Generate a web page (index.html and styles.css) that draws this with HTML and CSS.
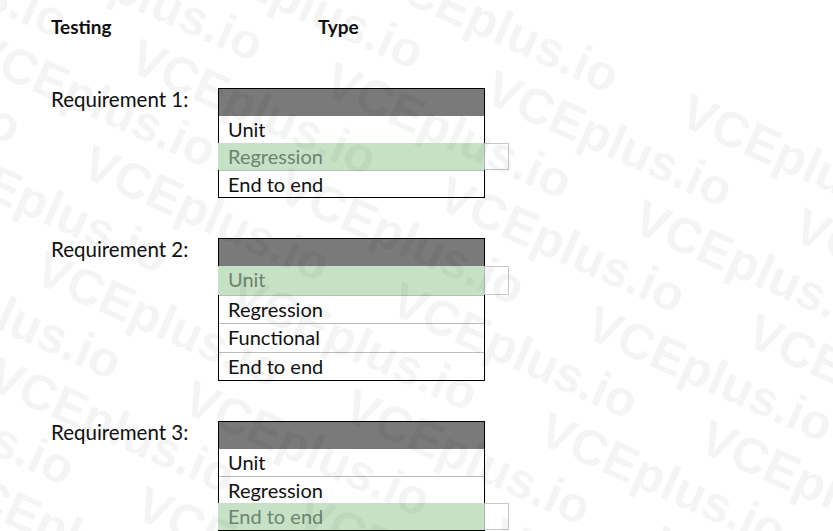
FILE: index.html
```html
<!DOCTYPE html>
<html lang="en">
<head>
  <meta charset="UTF-8">
  <title>Testing type</title>
  <link rel="stylesheet" href="styles.css">
</head>
<body>
  <div class="page">
    <div class="heads">
      <span>Testing</span>
      <span>Type</span>
    </div>

    <div class="req">
      <div class="label">Requirement 1:</div>
      <div class="select">
        <div class="head"></div>
        <div class="opt">Unit</div>
        <div class="opt picked"><span>Regression</span></div>
        <div class="opt">End to end</div>
      </div>
    </div>

    <div class="req">
      <div class="label">Requirement 2:</div>
      <div class="select tall">
        <div class="head"></div>
        <div class="opt picked"><span>Unit</span></div>
        <div class="opt">Regression</div>
        <div class="opt">Functional</div>
        <div class="opt">End to end</div>
      </div>
    </div>

    <div class="req">
      <div class="label">Requirement 3:</div>
      <div class="select">
        <div class="head"></div>
        <div class="opt">Unit</div>
        <div class="opt">Regression</div>
        <div class="opt picked"><span>End to end</span></div>
      </div>
    </div>
  </div>

  <!-- watermark over the whole picture -->
  <div class="wm" aria-hidden="true">
    <div class="wm-inner">
      <div class="wm-line">VCEplus.io VCEplus.io VCEplus.io VCEplus.io</div>
      <div class="wm-line">VCEplus.io VCEplus.io VCEplus.io VCEplus.io</div>
      <div class="wm-line">VCEplus.io VCEplus.io VCEplus.io VCEplus.io</div>
      <div class="wm-line">VCEplus.io VCEplus.io VCEplus.io VCEplus.io</div>
      <div class="wm-line">VCEplus.io VCEplus.io VCEplus.io VCEplus.io</div>
      <div class="wm-line">VCEplus.io VCEplus.io VCEplus.io VCEplus.io</div>
      <div class="wm-line">VCEplus.io VCEplus.io VCEplus.io VCEplus.io</div>
      <div class="wm-line">VCEplus.io VCEplus.io VCEplus.io VCEplus.io</div>
      <div class="wm-line">VCEplus.io VCEplus.io VCEplus.io VCEplus.io</div>
      <div class="wm-line">VCEplus.io VCEplus.io VCEplus.io VCEplus.io</div>
      <div class="wm-line">VCEplus.io VCEplus.io VCEplus.io VCEplus.io</div>
      <div class="wm-line">VCEplus.io VCEplus.io VCEplus.io VCEplus.io</div>
      <div class="wm-line">VCEplus.io VCEplus.io VCEplus.io VCEplus.io</div>
    </div>
  </div>
</body>
</html>
```

FILE: styles.css
```css
body {
  margin: 0;
  background: #fff;
  font-family: Lato, "Open Sans", sans-serif;
  color: #111;
  overflow: hidden;
}
.page {
  padding: 15px 0 0 51px;
}
.heads {
  display: grid;
  grid-template-columns: 267px auto;
  font-weight: bold;
  font-size: 19px;
  line-height: 24px;
}
.req {
  display: grid;
  grid-template-columns: 167px 267px;
  margin-top: 40px;
  font-size: 20px;
}
.heads + .req {
  margin-top: 49px;
}
.label {
  font-size: 20.5px;
  line-height: 19px;
  padding-top: 2px;
}
.select {
  border: 1px solid #000;
  background: #fff;
}
.head {
  height: 27px;
  background: #7a7a7a;
}
.opt {
  height: 27px;
  line-height: 26px;
  padding-left: 9px;
  border-top: 1px solid #bdbdbd;
  box-sizing: border-box;
}
.tall .opt {
  height: 28.5px;
  line-height: 27px;
}
.head + .opt {
  border-top: none;
}
.picked {
  display: flex;
  padding: 0;
  margin: 0 -25px 0 -1px;
  border-top: none;
}
.picked span {
  flex: 1;
  padding-left: 10px;
  background: #c6e2c6;
  color: #6f8270;
  border-right: 1px solid #b5b5b5;
}
.picked::after {
  content: "";
  width: 23px;
  border: 1px solid #c8c8c8;
  border-left: none;
  background: #fff;
}
.wm {
  position: absolute;
  inset: 0;
  overflow: hidden;
  pointer-events: none;
}
.wm-inner {
  position: absolute;
  left: -230px;
  top: -330px;
  transform: rotate(24deg);
  transform-origin: 0 0;
}
.wm-line {
  font-family: "Liberation Sans", Arial, sans-serif;
  font-weight: bold;
  font-size: 50px;
  line-height: 58px;
  white-space: nowrap;
  word-spacing: 60px;
  color: rgba(0, 0, 0, 0.045);
}
.wm-line:nth-child(even) {
  padding-left: 150px;
}
```
